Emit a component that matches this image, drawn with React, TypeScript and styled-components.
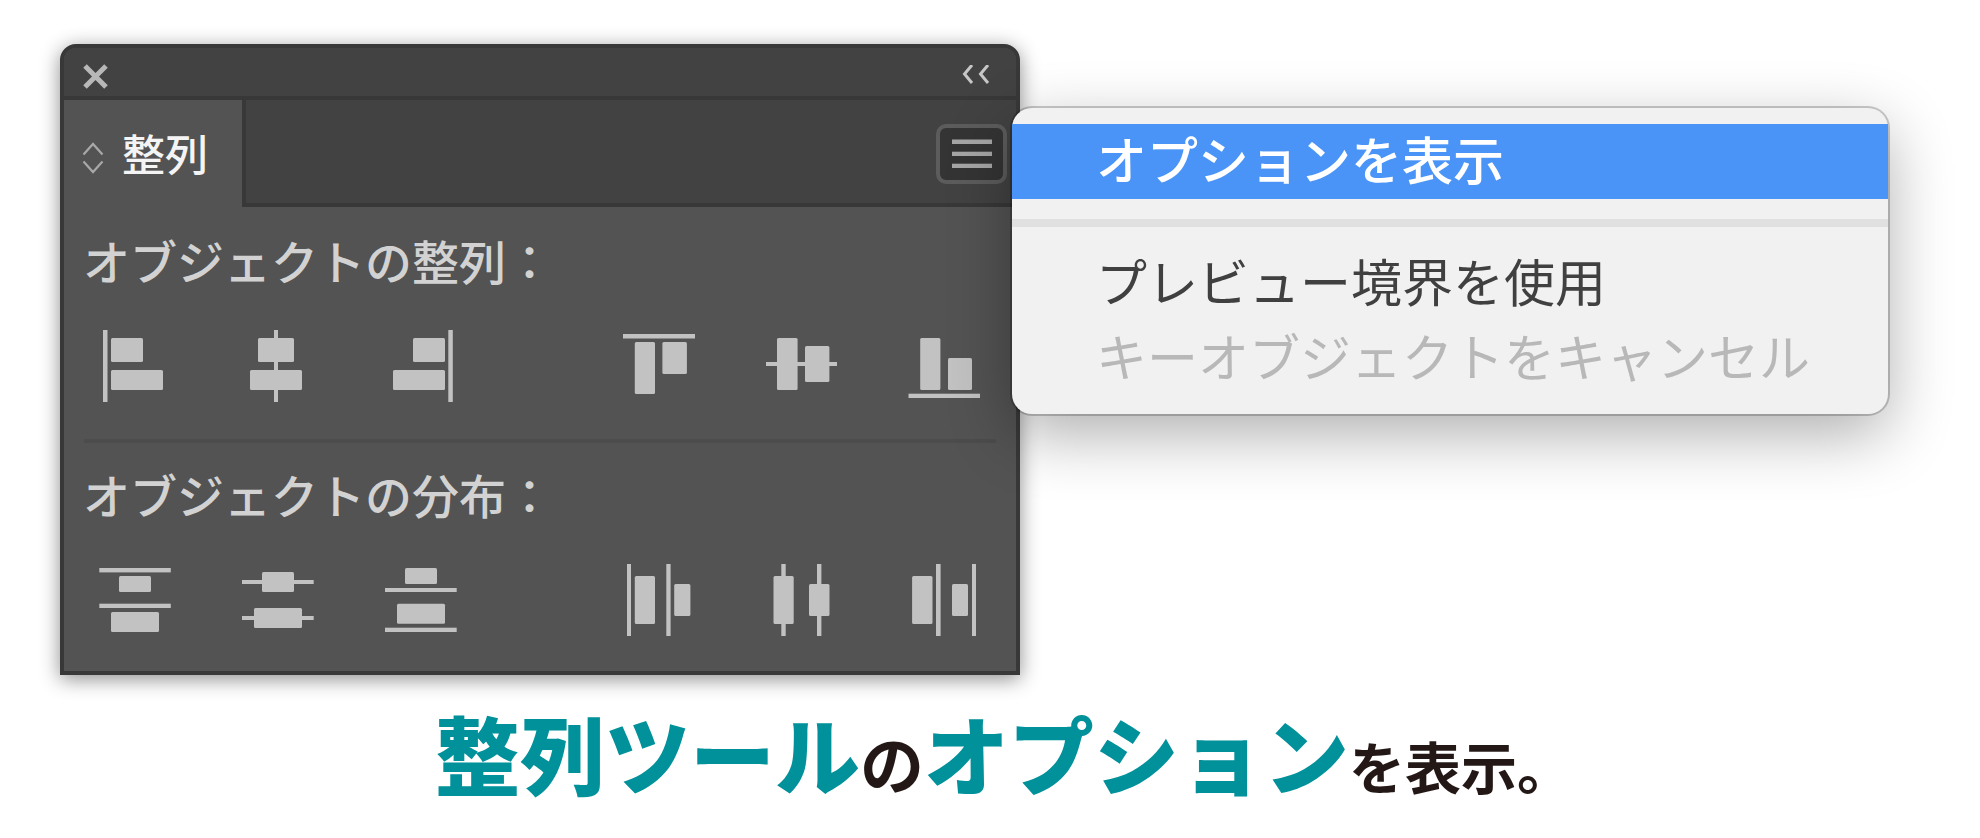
import React from "react";
import styled, { createGlobalStyle } from "styled-components";

const GlobalStyle = createGlobalStyle`
  *, *::before, *::after { box-sizing: border-box; }
  body {
    margin: 0;
    background: #ffffff;
    font-family: "Noto Sans CJK JP", "Noto Sans", sans-serif;
  }
`;

const Page = styled.main`
  padding: 44px 60px 0;
`;

const Workspace = styled.div`
  display: flex;
`;

const Panel = styled.section`
  position: relative;
  flex: 0 1 960px;
  min-width: 0;
  border: 4px solid #383838;
  border-radius: 16px 16px 0 0;
  background: #535353;
  box-shadow: 0 4px 20px rgba(0, 0, 0, 0.45);
`;

const TitleBar = styled.header`
  display: flex;
  align-items: center;
  justify-content: space-between;
  height: 52px;
  padding: 6px 26px 0 18px;
  border-bottom: 4px solid #383838;
  border-radius: 12px 12px 0 0;
  background: #424242;
`;

const IconButton = styled.button`
  display: flex;
  padding: 0;
  border: 0;
  background: none;
  cursor: pointer;
`;

const TabBar = styled.div`
  display: flex;
  height: 107px;
`;

const Tab = styled.button`
  display: flex;
  align-items: center;
  gap: 18px;
  width: 182px;
  padding: 0 0 4px 18px;
  border: 0;
  border-right: 4px solid #383838;
  background: #535353;
  color: #f4f4f4;
  font-family: inherit;
  font-size: 43px;
  font-weight: 500;
  line-height: 64px;
  white-space: nowrap;
`;

const TabFill = styled.div`
  display: flex;
  flex: 1;
  align-items: flex-start;
  justify-content: flex-end;
  padding: 24px 9px 0 0;
  border-bottom: 4px solid #383838;
  background: #424242;
`;

const MenuButton = styled(IconButton)`
  align-items: center;
  justify-content: center;
  width: 71px;
  height: 60px;
  border: 4px solid #5c5c5c;
  border-radius: 10px;
  background: #343434;
`;

const PanelBody = styled.div`
  padding: 17px 0 35px;
`;

const Group = styled.section`
  padding: 0 35px 0 19px;
`;

const GroupTitle = styled.h2`
  margin: 0 0 34px;
  color: #d2d2d2;
  font-size: 47px;
  font-weight: 500;
  line-height: 72px;
  white-space: nowrap;
`;

const ToolRow = styled.div`
  display: flex;
  justify-content: space-between;
  padding-left: 16px;
`;

const ToolSet = styled.div`
  display: flex;
  gap: 71px;
`;

const Divider = styled.hr`
  height: 4px;
  margin: 37px 20px 15px;
  border: 0;
  background: #4c4c4c;
`;

const Menu = styled.ul`
  position: absolute;
  top: 60px;
  left: calc(100% - 4px);
  margin: 0;
  padding: 16px 0 18px;
  border-radius: 20px;
  background: #f1f1f1;
  list-style: none;
  box-shadow: 0 0 0 2px rgba(0, 0, 0, 0.2), 0 20px 64px rgba(0, 0, 0, 0.32);
`;

const MenuItem = styled.button<{ $active?: boolean }>`
  display: block;
  width: 100%;
  height: 75px;
  padding: 0 78px 6px 84px;
  border: 0;
  background: ${(p) => (p.$active ? "#4a94f8" : "transparent")};
  color: ${(p) => (p.$active ? "#ffffff" : "#404040")};
  font-family: inherit;
  font-size: 51px;
  font-weight: ${(p) => (p.$active ? 500 : 400)};
  line-height: 69px;
  text-align: left;
  white-space: nowrap;

  &:disabled { color: #b8b8b8; }
`;

const MenuSeparator = styled.li`
  height: 8px;
  margin: 20px 0 19px;
  background: #e0e0e0;
`;

const Caption = styled.p`
  margin: 0;
  padding: 17px 0 0 28px;
  color: #231815;
  font-size: 56px;
  font-weight: 700;
  line-height: 120px;
  text-align: center;
  white-space: nowrap;
`;

const Accent = styled.strong`
  color: #00919a;
  font-size: 85px;
`;

const Particle = styled.span`
  font-size: 64px;
`;

type Shape = [x: number, y: number, w: number, h: number];
type Tool = { label: string; lines: Shape[]; blocks: Shape[] };

const alignH: Tool[] = [
  { label: "水平方向左に整列", lines: [[4, 0, 4.5, 72]], blocks: [[12, 8, 32, 24], [12, 40, 52, 20]] },
  { label: "水平方向中央に整列", lines: [[32, 0, 4, 72]], blocks: [[16, 8, 36, 24], [8, 40, 52, 20]] },
  { label: "水平方向右に整列", lines: [[63.3, 0, 4.5, 72]], blocks: [[28, 8, 32, 24], [8, 40, 52, 20]] },
];
const alignV: Tool[] = [
  { label: "垂直方向上に整列", lines: [[0, 4, 72, 4.5]], blocks: [[11.8, 12, 20.2, 52], [39.4, 12, 24.5, 32]] },
  { label: "垂直方向中央に整列", lines: [[0, 32, 71, 4]], blocks: [[11, 8, 20.6, 52], [39, 16, 24.4, 36]] },
  { label: "垂直方向下に整列", lines: [[-0.5, 63.7, 71.5, 4.3]], blocks: [[11.2, 8, 20.2, 52], [39, 28, 24, 32]] },
];
const spreadV: Tool[] = [
  { label: "垂直方向上に分布", lines: [[0.3, 4, 71.5, 4.4], [0.3, 39.7, 71.5, 4.3]], blocks: [[20, 12, 32, 16], [12, 48, 48, 20]] },
  { label: "垂直方向中央に分布", lines: [[0, 16, 71.7, 4], [0, 52, 71.7, 4]], blocks: [[20, 8, 32, 20], [12, 44, 48, 20]] },
  { label: "垂直方向下に分布", lines: [[0, 24, 71.7, 4], [0, 63.7, 71.7, 4.3]], blocks: [[20, 4, 32, 16], [12, 39.7, 48, 20]] },
];
const spreadH: Tool[] = [
  { label: "水平方向左に分布", lines: [[4, 0, 4, 72], [43.3, 0, 4.3, 72]], blocks: [[11.8, 12, 20.2, 48], [51.2, 20, 16.2, 32]] },
  { label: "水平方向中央に分布", lines: [[15.3, 0, 4.4, 72], [51, 0, 4.4, 72]], blocks: [[7.5, 12, 20.2, 48], [43, 20, 20.5, 32]] },
  { label: "水平方向右に分布", lines: [[27, 0, 4.6, 72], [63, 0, 4, 72]], blocks: [[3.1, 12, 20.4, 48], [43, 20, 16, 32]] },
];

function Tools({ items }: { items: Tool[] }) {
  return (
    <ToolSet>
      {items.map((tool) => (
        <IconButton key={tool.label} aria-label={tool.label}>
          <svg width="72" height="72" viewBox="0 0 72 72" fill="#c2c2c2" overflow="visible">
            {tool.lines.map(([x, y, w, h], i) => (
              <rect key={"l" + i} x={x} y={y} width={w} height={h} />
            ))}
            {tool.blocks.map(([x, y, w, h], i) => (
              <rect key={"b" + i} x={x} y={y} width={w} height={h} rx="1.5" />
            ))}
          </svg>
        </IconButton>
      ))}
    </ToolSet>
  );
}

export default function App() {
  return (
    <>
      <GlobalStyle />
      <Page>
        <Workspace>
          <Panel>
            <TitleBar>
              <IconButton aria-label="閉じる">
                <svg width="28" height="28" viewBox="0 0 28 28" fill="none" stroke="#b8b8b8" strokeWidth="5">
                  <path d="M3 5 L24 26 M24 5 L3 26" />
                </svg>
              </IconButton>
              <IconButton aria-label="パネルを折りたたむ">
                <svg width="28" height="20" viewBox="0 0 28 20" fill="none" stroke="#c6c6c6" strokeWidth="3">
                  <path d="M10 0 L2.5 9 L10 18 M26 0 L18.5 9 L26 18" />
                </svg>
              </IconButton>
            </TitleBar>
            <TabBar>
              <Tab>
                <svg width="22" height="44" viewBox="0 0 22 44" fill="none" stroke="#a8a8a8" strokeWidth="2.2">
                  <path d="M1.5 24.5 L11 14 L20.5 24.5 M1.5 31.5 L11 42 L20.5 31.5" />
                </svg>
                整列
              </Tab>
              <TabFill>
                <MenuButton aria-label="パネルメニュー" aria-haspopup="menu">
                  <svg width="40" height="30" viewBox="0 0 40 30" fill="#a6a6a6">
                    <rect y="0.5" width="40" height="4.5" />
                    <rect y="12.7" width="40" height="4.3" />
                    <rect y="24.7" width="40" height="4.3" />
                  </svg>
                </MenuButton>
              </TabFill>
            </TabBar>
            <PanelBody>
              <Group>
                <GroupTitle>オブジェクトの整列：</GroupTitle>
                <ToolRow>
                  <Tools items={alignH} />
                  <Tools items={alignV} />
                </ToolRow>
              </Group>
              <Divider />
              <Group>
                <GroupTitle>オブジェクトの分布：</GroupTitle>
                <ToolRow>
                  <Tools items={spreadV} />
                  <Tools items={spreadH} />
                </ToolRow>
              </Group>
            </PanelBody>
            <Menu>
              <li><MenuItem $active>オプションを表示</MenuItem></li>
              <MenuSeparator role="separator" />
              <li><MenuItem>プレビュー境界を使用</MenuItem></li>
              <li><MenuItem disabled>キーオブジェクトをキャンセル</MenuItem></li>
            </Menu>
          </Panel>
        </Workspace>
        <Caption>
          <Accent>整列ツール</Accent>
          <Particle>の</Particle>
          <Accent>オプション</Accent>を表示。
        </Caption>
      </Page>
    </>
  );
}
